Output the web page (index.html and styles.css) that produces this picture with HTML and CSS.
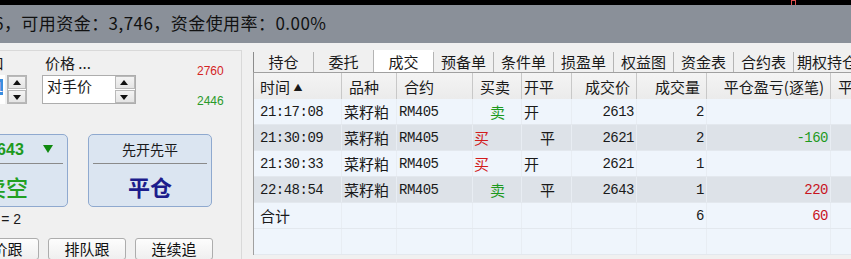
FILE: index.html
```html
<!DOCTYPE html>
<html lang="zh-CN">
<head>
  <meta charset="UTF-8" />
  <title>交易</title>
  <link rel="stylesheet" href="styles.css">
</head>
<body>
  <div class="topline"><span class="mark"></span></div>
  <div class="status"><span class="status-text">6，可用资金：3,746，资金使用率：0.00%</span></div>

  <div class="main">
    <div class="panel">
      <div class="top">
        <div class="fields">
          <div class="qty-label">手数 口</div>
          <div class="price-label">价格 ...</div>
          <div class="qty-box">
            <div class="qty-input"><span class="sel">1</span></div>
            <div class="spin"><span class="up"></span><span class="down"></span></div>
          </div>
          <div class="price-box">
            <span class="price-text">对手价</span>
            <div class="spin inner"><span class="up"></span><span class="down"></span></div>
          </div>
        </div>
        <div class="limits">
          <span class="up-limit">2760</span>
          <span class="down-limit">2446</span>
        </div>
      </div>

      <div class="orders">
        <div class="order-btn sell">
          <div class="order-top"><b>2643</b><span class="arrow"></span></div>
          <div class="order-main">卖空</div>
        </div>
        <div class="order-btn close">
          <div class="order-top">先开先平</div>
          <div class="order-main">平仓</div>
        </div>
      </div>

      <div class="pos-note">可平 = 2</div>

      <div class="follow">
        <button>对价跟</button>
        <button>排队跟</button>
        <button>连续追</button>
      </div>
    </div>

    <div class="book">
      <div class="tabs">
        <span class="tab">持仓</span>
        <span class="tab">委托</span>
        <span class="tab active">成交</span>
        <span class="tab">预备单</span>
        <span class="tab">条件单</span>
        <span class="tab">损盈单</span>
        <span class="tab">权益图</span>
        <span class="tab">资金表</span>
        <span class="tab">合约表</span>
        <span class="tab last">期权持仓</span>
      </div>
      <div class="grid">
        <div class="row head">
          <span>时间 <i class="sort">▲</i></span>
          <span>品种</span>
          <span>合约</span>
          <span>买卖</span>
          <span class="tight">开平</span>
          <span class="r">成交价</span>
          <span class="r">成交量</span>
          <span class="r">平仓盈亏(逐笔)</span>
          <span>平仓盈亏(盯市)</span>
        </div>
        <div class="row">
          <span class="num time">21:17:08</span><span class="cn">菜籽粕</span><span class="num">RM405</span>
          <span class="cn side sell-t">卖</span><span class="cn oc">开</span>
          <span class="num r">2613</span><span class="num r">2</span><span class="num r"></span><span></span>
        </div>
        <div class="row alt">
          <span class="num time">21:30:09</span><span class="cn">菜籽粕</span><span class="num">RM405</span>
          <span class="cn side buy-t">买</span><span class="cn oc in">平</span>
          <span class="num r">2621</span><span class="num r">2</span><span class="num r loss">-160</span><span></span>
        </div>
        <div class="row">
          <span class="num time">21:30:33</span><span class="cn">菜籽粕</span><span class="num">RM405</span>
          <span class="cn side buy-t">买</span><span class="cn oc">开</span>
          <span class="num r">2621</span><span class="num r">1</span><span class="num r"></span><span></span>
        </div>
        <div class="row alt">
          <span class="num time">22:48:54</span><span class="cn">菜籽粕</span><span class="num">RM405</span>
          <span class="cn side sell-t">卖</span><span class="cn oc in">平</span>
          <span class="num r">2643</span><span class="num r">1</span><span class="num r gain">220</span><span></span>
        </div>
        <div class="row">
          <span class="cn time">合计</span><span></span><span></span><span></span><span></span>
          <span></span><span class="num r">6</span><span class="num r gain">60</span><span></span>
        </div>
        <div class="row"><span></span><span></span><span></span><span></span><span></span><span></span><span></span><span></span><span></span></div>
      </div>
    </div>
  </div>
</body>
</html>
```

FILE: styles.css
```css
body {
  margin: 0;
  background: #f0f0f0;
  font-family: "Noto Sans CJK SC", sans-serif;
  color: #1a1a1a;
  overflow: hidden;
  width: 851px;
  height: 259px;
}
.topline {
  height: 5px;
  background: #000;
  padding-left: 791px;
}
.mark {
  display: block;
  width: 3px;
  height: 4px;
  border: 1px solid #e05050;
  border-bottom: none;
}
.status {
  height: 38px;
  background: #8a9099;
  font-size: 17px;
  line-height: 35px;
  letter-spacing: 0.45px;
  white-space: nowrap;
  color: #111;
}
.status-text { margin-left: -6px; }

.main {
  display: flex;
  gap: 11px;
  padding-top: 7px;
}

/* left order panel */
.panel {
  margin-left: -66px;
  width: 308px;
  flex: none;
  box-sizing: border-box;
  border: 1px solid #d9d9d9;
  border-bottom: none;
  padding: 3px 0 0 9px;
  height: 216px;
}
.top { display: flex; }
.fields {
  display: grid;
  grid-template-columns: 83px 94px;
  grid-template-rows: 17px 29px;
  column-gap: 15px;
  row-gap: 4px;
  font-size: 15px;
  line-height: 17px;
}
.qty-label { text-align: right; padding-right: 23px; }
.price-label { padding-left: 3px; }
.qty-box { display: flex; gap: 2px; }
.qty-input {
  width: 61px;
  background: #fff;
  text-align: right;
  padding: 2px 2px 0 0;
  box-sizing: border-box;
}
.sel {
  background: #3b8ee0;
  color: #fff;
  font-family: "Liberation Sans", sans-serif;
  font-size: 14px;
}
.spin {
  width: 20px;
  display: flex;
  flex-direction: column;
  gap: 1px;
  border: 1px solid #b4b4b4;
  box-sizing: border-box;
  background: #fff;
}
.spin span {
  flex: 1;
  background: linear-gradient(#f4f4f4, #e4e4e4);
  border: 1px solid #b9b9b9;
  position: relative;
}
.spin span::after {
  content: "";
  position: absolute;
  left: 4px;
  top: 3px;
  border-left: 4px solid transparent;
  border-right: 4px solid transparent;
}
.spin .up::after { border-bottom: 5px solid #111; }
.spin .down::after { border-top: 5px solid #111; top: 4px; }
.price-box {
  display: flex;
  justify-content: space-between;
  background: #fff;
  border: 1px solid #adadad;
  box-sizing: border-box;
}
.price-text { padding: 1px 0 0 4px; }
.spin.inner { border: none; width: 20px; }

.limits {
  display: flex;
  flex-direction: column;
  gap: 16px;
  margin: 10px 0 0 61px;
  font-family: "Liberation Sans", sans-serif;
  font-size: 12px;
  line-height: 14px;
}
.up-limit { color: #d42424; }
.down-limit { color: #2a9a2a; }

.orders {
  display: flex;
  gap: 20px;
  margin-top: 26px;
}
.order-btn {
  width: 124px;
  height: 73px;
  box-sizing: border-box;
  border: 1px solid #8fa9cf;
  border-radius: 5px;
  background: #dbe5f1;
  padding: 0 4px;
  text-align: center;
}
.order-top {
  position: relative;
  height: 28px;
  line-height: 28px;
  border-bottom: 1px solid #8a8a8a;
  font-size: 14px;
}
.order-top b {
  font-family: "Liberation Sans", sans-serif;
  font-size: 16px;
  color: #1d9a1d;
}
.arrow {
  position: absolute;
  right: 10px;
  top: 10px;
  border-left: 5px solid transparent;
  border-right: 5px solid transparent;
  border-top: 8px solid #108a10;
}
.order-main {
  font-size: 22px;
  font-weight: 500;
  line-height: 42px;
  padding-top: 1px;
}
.sell .order-main { color: #22a022; }
.close .order-main { color: #1c1c8c; font-weight: bold; }

.pos-note {
  width: 77px;
  text-align: right;
  margin-top: 4px;
  font-family: "Liberation Sans", sans-serif;
  font-size: 14px;
  line-height: 16px;
}
.follow {
  display: flex;
  gap: 9px;
  margin: 11px 0 0 17px;
}
.follow button {
  width: 78px;
  height: 22px;
  padding: 0;
  font-family: inherit;
  font-size: 15px;
  line-height: 20px;
  color: #111;
  background: linear-gradient(#fdfdfd, #efefef);
  border: 1px solid #adadad;
  border-radius: 3px;
}

/* right trade book */
.book {
  flex: 1;
  min-width: 0;
  overflow: hidden;
}
.tabs {
  display: flex;
  height: 22px;
  white-space: nowrap;
}
.tab {
  flex: none;
  width: 60px;
  box-sizing: border-box;
  border-left: 1px solid #b4b4b4;
  margin-top: 2px;
  text-align: center;
  font-size: 15px;
  line-height: 20px;
}
.tab:first-child { border-left-color: #8c8c8c; }
.tab.last { width: 80px; text-align: left; padding-left: 3px; }
.tab.active {
  background: #fff;
  margin-top: 0;
  line-height: 24px;
}
.grid {
  border-top: 1px solid #a0a0a0;
  border-left: 1px solid #a0a0a0;
}
.row {
  display: grid;
  grid-template-columns: 88px 55px 76px 49px 50px 65px 70px 124px 130px;
  height: 26px;
  width: 707px;
  background: #eff5fc;
  border-bottom: 1px solid #e3e8ee;
  box-sizing: border-box;
  white-space: nowrap;
}
.row.alt { background: #dde2e8; }
.row span {
  border-right: 1px solid #e8edf3;
  overflow: hidden;
  padding-left: 2px;
  line-height: 26px;
  font-size: 15px;
}
.row .r { text-align: right; padding: 0 2px 0 0; }
.row .time { padding-left: 6px; }
.num {
  font-family: "Liberation Mono", monospace;
  letter-spacing: -0.5px;
}
.row .num { font-size: 14px; }
.row .side { padding-left: 1px; }
.row .sell-t { padding-left: 17px; color: #1d9a1d; }
.buy-t { color: #d21c1c; }
.row .in { padding-left: 18px; }
.loss { color: #1d9a1d; }
.gain { color: #c8141e; }

.row.head {
  background: linear-gradient(#f4f4f4, #ebebeb);
  border-bottom: none;
}
.row.head span {
  border-right: 1px solid #c8c8c8;
  padding: 2px 0 0 7px;
  line-height: 24px;
}
.row.head .tight { padding-left: 2px; }
.row.head .r { padding: 2px 6px 0 0; }
.row.head span:first-child { padding-left: 6px; }
.sort {
  font-style: normal;
  font-size: 9px;
  vertical-align: 2px;
}
```
